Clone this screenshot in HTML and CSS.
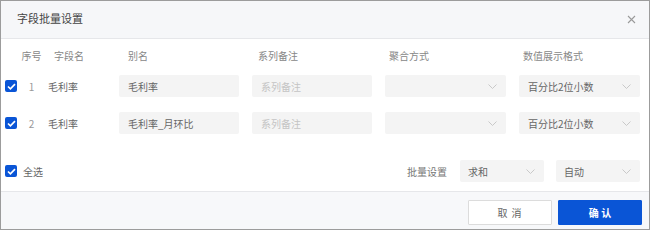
FILE: index.html
```html
<!DOCTYPE html>
<html lang="zh-CN">
<head>
<meta charset="utf-8">
<title>字段批量设置</title>
<link rel="stylesheet" href="styles.css">
</head>
<body>
<div class="dialog">
  <div class="dlg-header">
    <div class="dlg-title">字段批量设置</div>
    <svg class="close" width="9" height="9" viewBox="0 0 9 9"><path d="M1 1L8 8M8 1L1 8" stroke="#9a9a9a" stroke-width="1.1" fill="none"/></svg>
  </div>
  <div class="dlg-body">
    <div class="row thead">
      <div class="c-check"></div>
      <div class="c-seq">序号</div>
      <div class="c-name h-name">字段名</div>
      <div class="c-in h1">别名</div>
      <div class="c-in h2">系列备注</div>
      <div class="c-sel h3">聚合方式</div>
      <div class="c-sel h3">数值展示格式</div>
    </div>
    <div class="row r1">
      <div class="c-check"><span class="cb"><svg width="9" height="7" viewBox="0 0 9 7"><path d="M1 3.5L3.4 5.8L8 1.2" stroke="#fff" stroke-width="1.7" fill="none"/></svg></span></div>
      <div class="c-seq">1</div>
      <div class="c-name">毛利率</div>
      <div class="c-in field val">毛利率</div>
      <div class="c-in field ph">系列备注</div>
      <div class="c-sel field sel"><span></span><svg class="arrow" width="9" height="5" viewBox="0 0 9 5"><path d="M0.5 0.5L4.5 4.5L8.5 0.5" stroke="#c9c9c9" stroke-width="1" fill="none"/></svg></div>
      <div class="c-sel field sel val"><span>百分比2位小数</span><svg class="arrow" width="9" height="5" viewBox="0 0 9 5"><path d="M0.5 0.5L4.5 4.5L8.5 0.5" stroke="#c9c9c9" stroke-width="1" fill="none"/></svg></div>
    </div>
    <div class="row r2">
      <div class="c-check"><span class="cb"><svg width="9" height="7" viewBox="0 0 9 7"><path d="M1 3.5L3.4 5.8L8 1.2" stroke="#fff" stroke-width="1.7" fill="none"/></svg></span></div>
      <div class="c-seq">2</div>
      <div class="c-name">毛利率</div>
      <div class="c-in field val">毛利率_月环比</div>
      <div class="c-in field ph">系列备注</div>
      <div class="c-sel field sel"><span></span><svg class="arrow" width="9" height="5" viewBox="0 0 9 5"><path d="M0.5 0.5L4.5 4.5L8.5 0.5" stroke="#c9c9c9" stroke-width="1" fill="none"/></svg></div>
      <div class="c-sel field sel val"><span>百分比2位小数</span><svg class="arrow" width="9" height="5" viewBox="0 0 9 5"><path d="M0.5 0.5L4.5 4.5L8.5 0.5" stroke="#c9c9c9" stroke-width="1" fill="none"/></svg></div>
    </div>
    <div class="row batch">
      <div class="all">
        <span class="cb"><svg width="9" height="7" viewBox="0 0 9 7"><path d="M1 3.5L3.4 5.8L8 1.2" stroke="#fff" stroke-width="1.7" fill="none"/></svg></span>
        <span class="all-label">全选</span>
      </div>
      <div class="batch-right">
        <span class="batch-label">批量设置</span>
        <div class="field sel small val"><span>求和</span><svg class="arrow" width="9" height="5" viewBox="0 0 9 5"><path d="M0.5 0.5L4.5 4.5L8.5 0.5" stroke="#c9c9c9" stroke-width="1" fill="none"/></svg></div>
        <div class="field sel small val"><span>自动</span><svg class="arrow" width="9" height="5" viewBox="0 0 9 5"><path d="M0.5 0.5L4.5 4.5L8.5 0.5" stroke="#c9c9c9" stroke-width="1" fill="none"/></svg></div>
      </div>
    </div>
  </div>
  <div class="dlg-footer">
    <button class="btn btn-cancel">取 消</button>
    <button class="btn btn-ok">确 认</button>
  </div>
</div>
</body>
</html>
```

FILE: styles.css
```css
html, body {
  margin: 0;
  padding: 0;
  background: #ffffff;
}

.dialog {
  width: 650px;
  height: 230px;
  box-sizing: border-box;
  border: 1px solid #9c9c9c;
  display: flex;
  flex-direction: column;
  font-family: "Noto Sans CJK SC", "Noto Sans", sans-serif;
  font-size: 10px;
  color: #666;
  background: #fff;
}

.dlg-header {
  height: 37px;
  flex: 0 0 37px;
  background: #f6f7f9;
  border-bottom: 1px solid #e6e7ea;
  display: flex;
  align-items: center;
  justify-content: space-between;
  padding: 0 13px 0 16px;
}

.dlg-title {
  font-size: 11px;
  color: #444;
  padding-bottom: 4px;
}

.close {
  display: block;
}

.dlg-body {
  flex: 1;
  display: flex;
  flex-direction: column;
  padding: 5px 9px 0 4px;
}

.row {
  display: flex;
  align-items: center;
  height: 22px;
}

.thead {
  color: #888;
}

.r1 { margin-top: 9px; }
.r2 { margin-top: 15px; }
.batch { margin-top: 26px; justify-content: space-between; }

.c-check {
  width: 12px;
  flex: 0 0 12px;
  display: flex;
}

.c-seq {
  width: 29px;
  flex: 0 0 29px;
  text-align: center;
  color: #999;
}

.thead .c-seq { color: #888; }

.c-name {
  width: 73px;
  flex: 0 0 73px;
  padding-left: 2px;
  box-sizing: border-box;
}

.h-name { padding-left: 8px; }

.c-in {
  width: 120px;
  flex: 0 0 120px;
  box-sizing: border-box;
  margin-right: 13px;
}

.c-sel {
  width: 121px;
  flex: 0 0 121px;
  box-sizing: border-box;
}

.c-sel + .c-sel { margin-left: 13px; }

.h1 { padding-left: 9px; }
.h2 { padding-left: 6px; }
.h3 { padding-left: 4px; }

.field {
  height: 22px;
  background: #f4f4f4;
  border-radius: 2px;
  display: flex;
  align-items: center;
  padding-left: 9px;
}

.val { color: #666; }
.ph { color: #c4c4c4; }

.sel {
  justify-content: space-between;
  padding-right: 9px;
}

.arrow { display: block; }

.cb {
  width: 12px;
  height: 12px;
  background: #0a55d6;
  border-radius: 2px;
  display: flex;
  align-items: center;
  justify-content: center;
}

.cb svg { display: block; }

.all {
  display: flex;
  align-items: center;
}

.all-label {
  margin-left: 6px;
  color: #666;
}

.batch-right {
  display: flex;
  align-items: center;
}

.batch-label {
  color: #777;
  margin-right: 13px;
}

.small {
  width: 84px;
  box-sizing: border-box;
  padding-left: 8px;
}

.small + .small { margin-left: 12px; }

.dlg-footer {
  flex: 0 0 38px;
  height: 38px;
  box-sizing: border-box;
  border-top: 1px solid #e6e7ea;
  background: #f7f8fa;
  display: flex;
  justify-content: flex-end;
  align-items: flex-start;
  padding: 8px 7px 0 0;
  gap: 6px;
}

.btn {
  width: 84px;
  height: 25px;
  font-family: "Noto Sans CJK SC", "Noto Sans", sans-serif;
  font-size: 10px;
  border-radius: 1px;
  padding: 0;
  cursor: pointer;
}

.btn-cancel {
  background: #fff;
  border: 1px solid #dcdcdc;
  color: #666;
  letter-spacing: 1px;
}

.btn-ok {
  background: #0a55d6;
  border: 1px solid #0a55d6;
  color: #fff;
  font-weight: bold;
}
```
